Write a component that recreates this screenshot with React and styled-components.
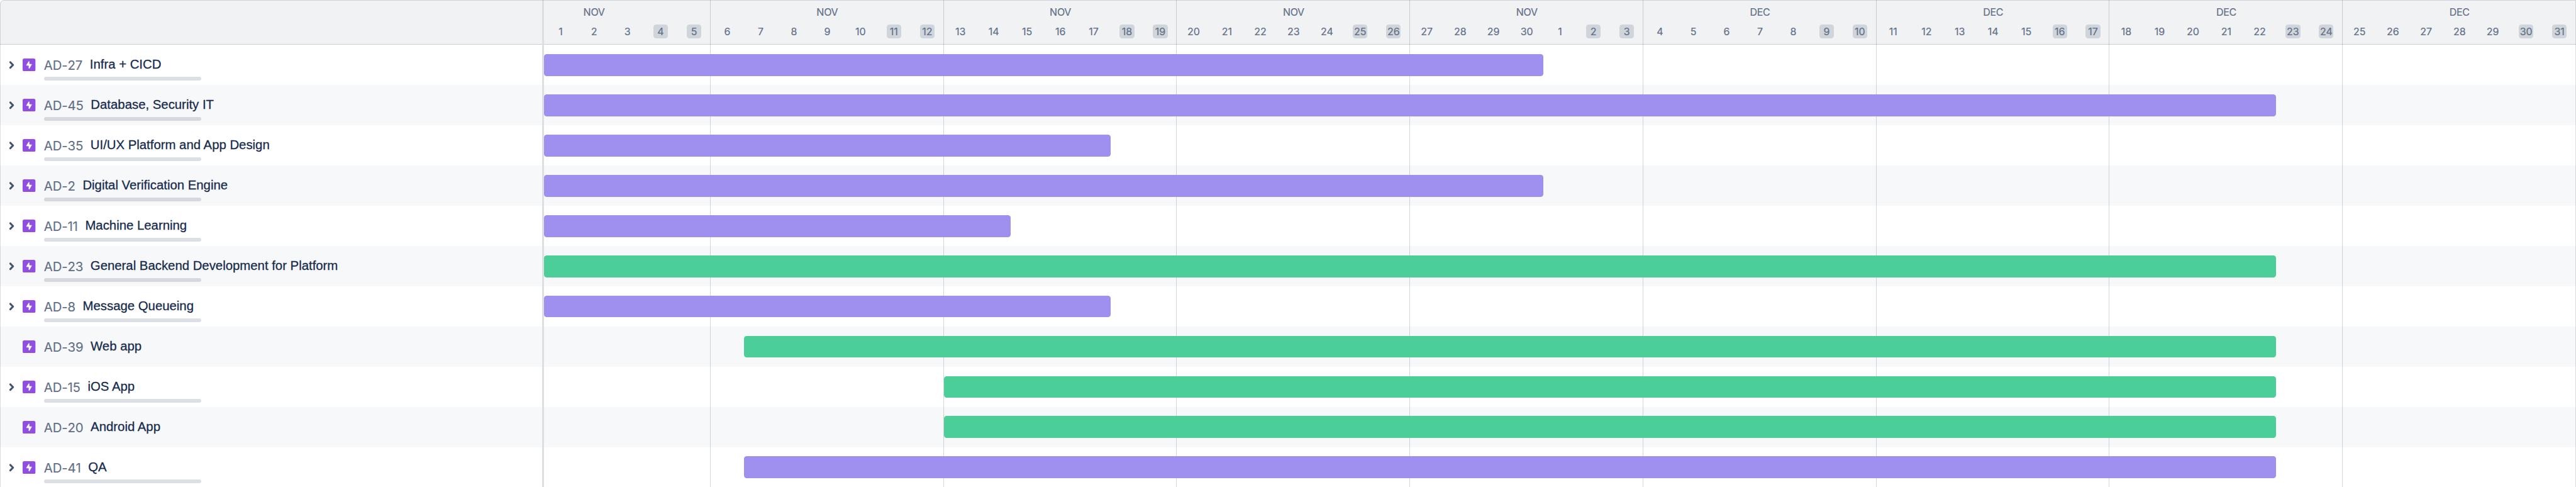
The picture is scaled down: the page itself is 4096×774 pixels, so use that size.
import React from 'react';
import styled, { createGlobalStyle } from 'styled-components';

/* Design units are laid out on a 5634-unit wide board shown in a 4096px window. */
const u = (n) => `${((n * 4096) / 5634).toFixed(3)}px`;

const DAY = 72.857;
const HAIR = 'rgba(9, 30, 66, 0.14)';
const COLORS = { purple: '#9f8fef', green: '#4bce97' };

const GlobalStyle = createGlobalStyle`
  * { box-sizing: border-box; }
  body { margin: 0; background: #fff; overflow: hidden; }
`;

const Board = styled.main`
  position: relative;
  display: flex;
  width: 100vw;
  height: 100vh;
  overflow: hidden;
  background: #fff;
  border-top-left-radius: ${u(8)};
  font-family: Inter, "Liberation Sans", sans-serif;
`;

const Frame = styled.div`
  position: absolute;
  inset: 0;
  z-index: 3;
  border: solid ${HAIR};
  border-width: ${u(2)} ${u(2)} 0;
  border-top-left-radius: ${u(8)};
  pointer-events: none;
`;

const IssueColumn = styled.section`
  flex: none;
  width: ${u(1190)};
  border-right: 3px solid #dcdfe4;
`;

const Timeline = styled.section`
  position: relative;
  flex: 1;
  min-width: 0;
`;

const Header = styled.header`
  height: ${u(98)};
  display: flex;
  background: #f1f2f4;
  border-bottom: ${u(2)} solid #cacfd7;
  overflow: hidden;
`;

const Row = styled.div`
  height: ${u(88)};
  background: ${(p) => (p.$striped ? '#f7f8f9' : '#fff')};
`;

const IssueRow = styled(Row)`
  padding-top: ${u(18)};
`;

const IssueLine = styled.div`
  height: ${u(52)};
  display: flex;
  align-items: center;
  padding-left: ${u(16)};
  white-space: nowrap;
`;

const ChevronSlot = styled.span`
  display: flex;
  width: ${u(34)};
  color: #44546f;
`;

const EpicIcon = styled.svg`
  display: block;
  width: ${u(28)};
  height: ${u(28)};
  margin-right: ${u(18)};
`;

const IssueKey = styled.span`
  margin: ${u(2)} ${u(16)} 0 0;
  font-size: ${u(28)};
  line-height: ${u(40)};
  letter-spacing: -0.006em;
  font-kerning: none;
  -webkit-text-stroke: 0.15px currentColor;
  color: #626f86;
`;

const IssueTitle = styled.span`
  margin-bottom: ${u(2)};
  font-family: "Liberation Sans", Arial, sans-serif;
  font-size: ${u(28)};
  line-height: ${u(40)};
  -webkit-text-stroke: 0.3px currentColor;
  color: #172b4d;
`;

const Progress = styled.div`
  width: ${u(344)};
  height: ${u(8)};
  margin-left: ${u(96)};
  border-radius: ${u(4)};
  background: ${HAIR};
`;

const Week = styled.div`
  flex: none;
  width: ${u(DAY * 7)};
  padding-top: ${u(12)};
`;

const Weeks = styled.div`
  display: flex;
  flex: none;
  margin-left: ${u(-DAY * 2)};
`;

const Month = styled.div`
  height: ${u(30)};
  line-height: ${u(30)};
  text-align: center;
  font-size: ${u(22)};
  letter-spacing: -0.015em;
  -webkit-text-stroke: 0.2px currentColor;
  color: #626f86;
`;

const Days = styled.div`
  display: grid;
  grid-template-columns: repeat(7, 1fr);
  justify-items: center;
  padding-top: ${u(12)};
`;

const Day = styled.div`
  width: ${u(32)};
  height: ${u(30)};
  display: flex;
  align-items: center;
  justify-content: center;
  padding-top: ${u(2)};
  border-radius: ${u(6)};
  background: ${(p) => (p.$weekend ? '#d0d4db' : 'transparent')};
  font-size: ${u(22)};
  line-height: ${u(28)};
  -webkit-text-stroke: 0.2px currentColor;
  color: #626f86;
`;

const WeekLines = styled.div`
  position: absolute;
  inset: 0;
  z-index: 1;
  display: flex;
  padding-left: ${u(DAY * 5 - 1.7)};
  pointer-events: none;
`;

const WeekLine = styled.i`
  flex: none;
  width: ${u(DAY * 7)};
  border-left: 1px solid rgba(9, 30, 66, 0.18);
`;

const BarRow = styled(Row)`
  display: flex;
  align-items: center;
  padding-left: ${(p) => u((p.$start - 1) * DAY)};
`;

const Bar = styled.div`
  position: relative;
  z-index: 2;
  width: ${(p) => u(p.$days * DAY)};
  height: ${u(48)};
  border-radius: ${u(6)};
  background: ${(p) => COLORS[p.$color]};
`;

const Chevron = () => (
  <svg width={u(18)} height={u(20)} viewBox="0 0 18 20" fill="none">
    <path d="M6 4 L12 10 L6 16" stroke="currentColor" strokeWidth="4.2" strokeLinecap="round" strokeLinejoin="round" />
  </svg>
);

const Epic = () => (
  <EpicIcon viewBox="0 0 28 28">
    <rect width="28" height="28" rx="3.6" fill="#904ee2" />
    <path d="M13.1 6.3 L8 14.3 Q7.6 15.3 8.6 15.6 L13.2 15.6 L13.2 21.2 Q13.8 22.6 15.1 21.7 L20 13.2 Q20.4 12.2 19.4 12 L14.7 12 L14.7 6.7 Q14 5.3 13.1 6.3 Z" fill="#fff" />
  </EpicIcon>
);

const issues = [
  { key: 'AD-27', title: 'Infra + CICD', color: 'purple', start: 1, end: 30, nested: true },
  { key: 'AD-45', title: 'Database, Security IT', color: 'purple', start: 1, end: 52, nested: true },
  { key: 'AD-35', title: 'UI/UX Platform and App Design', color: 'purple', start: 1, end: 17, nested: true },
  { key: 'AD-2', title: 'Digital Verification Engine', color: 'purple', start: 1, end: 30, nested: true },
  { key: 'AD-11', title: 'Machine Learning', color: 'purple', start: 1, end: 14, nested: true },
  { key: 'AD-23', title: 'General Backend Development for Platform', color: 'green', start: 1, end: 52, nested: true },
  { key: 'AD-8', title: 'Message Queueing', color: 'purple', start: 1, end: 17, nested: true },
  { key: 'AD-39', title: 'Web app', color: 'green', start: 7, end: 52, nested: false },
  { key: 'AD-15', title: 'iOS App', color: 'green', start: 13, end: 52, nested: true },
  { key: 'AD-20', title: 'Android App', color: 'green', start: 13, end: 52, nested: false },
  { key: 'AD-41', title: 'QA', color: 'purple', start: 7, end: 52, nested: true },
];

/* Weeks run Monday to Sunday; the first one begins two days before 1 November. */
const weeks = Array.from({ length: 9 }, (_, w) => ({
  month: w < 5 ? 'NOV' : 'DEC',
  days: Array.from({ length: 7 }, (_, d) => {
    const n = w * 7 + d - 1;
    if (n < 1) return null;
    return n > 30 ? n - 30 : n;
  }),
}));

export default function App() {
  return (
    <Board>
      <GlobalStyle />
      <IssueColumn>
        <Header />
        {issues.map((issue, i) => (
          <IssueRow key={issue.key} $striped={i % 2 === 1}>
            <IssueLine>
              <ChevronSlot>{issue.nested && <Chevron />}</ChevronSlot>
              <Epic />
              <IssueKey>{issue.key}</IssueKey>
              <IssueTitle>{issue.title}</IssueTitle>
            </IssueLine>
            {issue.nested && <Progress />}
          </IssueRow>
        ))}
      </IssueColumn>
      <Timeline>
        <Header>
          <Weeks>
            {weeks.map((week, w) => (
              <Week key={w}>
                <Month>{week.month}</Month>
                <Days>
                  {week.days.map((day, d) => (
                    <Day key={d} $weekend={d > 4}>{day}</Day>
                  ))}
                </Days>
              </Week>
            ))}
          </Weeks>
        </Header>
        <WeekLines>
          {weeks.slice(0, 8).map((_, w) => <WeekLine key={w} />)}
        </WeekLines>
        {issues.map((issue, i) => (
          <BarRow key={issue.key} $striped={i % 2 === 1} $start={issue.start}>
            <Bar $color={issue.color} $days={issue.end - issue.start + 1} />
          </BarRow>
        ))}
      </Timeline>
      <Frame />
    </Board>
  );
}
